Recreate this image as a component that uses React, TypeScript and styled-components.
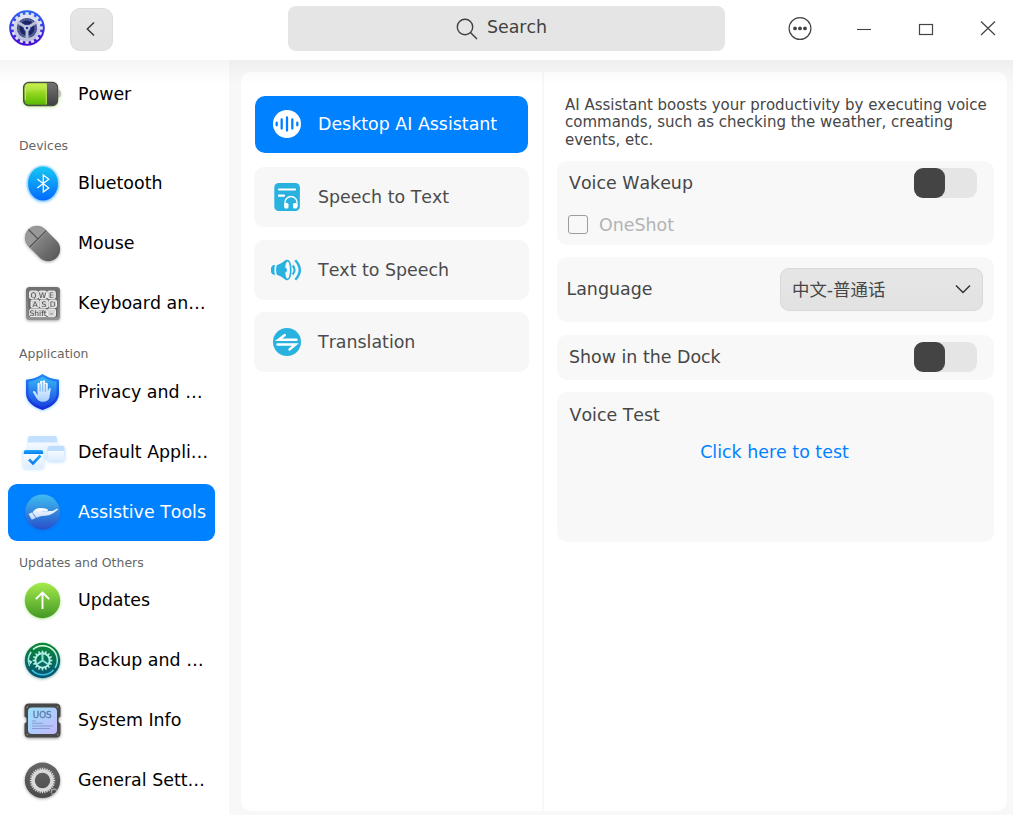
import React, { useState } from "react";
import styled, { createGlobalStyle, css } from "styled-components";

const GlobalStyle = createGlobalStyle`
  *, *::before, *::after { box-sizing: border-box; }
  body { margin: 0; background: #fff; font-family: "DejaVu Sans", "Noto Sans CJK SC", sans-serif; font-size: 17.42px; font-kerning: none; color: #000; }
  button { font: inherit; font-kerning: none; color: inherit; border: 0; padding: 0; background: none; text-align: left; }
  svg { display: block; flex: none; }
`;

const Window = styled.div`
  display: flex;
  flex-direction: column;
  width: 1013px;
  height: 815px;
  overflow: hidden;
  background: #fff;
`;

const TitleBar = styled.header`
  display: flex;
  height: 60px;
  flex: none;
  padding: 6px 0 0 9px;
  align-items: flex-start;
`;

const Logo = styled.svg`
  margin-top: 3px;
`;

const BackButton = styled.button`
  display: flex;
  align-items: center;
  justify-content: center;
  width: 43px;
  height: 43px;
  margin: 2px 0 0 25px;
  padding: 0 1px 1px 0;
  border: 1px solid #dcdcdc;
  border-radius: 10px;
  background: linear-gradient(#e6e6e6, #e3e3e3);
`;

const SearchBox = styled.div`
  display: flex;
  align-items: center;
  justify-content: center;
  gap: 9px;
  width: 437px;
  height: 45px;
  margin-left: 175px;
  padding-right: 10px;
  border-radius: 8px;
  background: #e5e5e5;
  color: #414141;
`;

const SearchLabel = styled.span`
  margin-top: -3px;
`;

const WindowControls = styled.div`
  display: flex;
  gap: 38.5px;
  margin: 10px 0 0 63px;
`;

const Body = styled.div`
  display: flex;
  flex: 1;
  min-height: 0;
  position: relative;
  &::before {
    content: "";
    position: absolute;
    inset: 0 0 auto 0;
    height: 24px;
    z-index: 2;
    pointer-events: none;
    background: linear-gradient(rgba(0, 0, 0, 0.038), rgba(0, 0, 0, 0));
  }
`;

const Sidebar = styled.nav`
  display: flex;
  flex-direction: column;
  width: 229px;
  flex: none;
  padding: 4px 14px 0 8px;
`;

const SectionTitle = styled.h2<{ $height: number; $top: number }>`
  display: flex;
  flex: none;
  align-items: center;
  height: ${(p) => p.$height}px;
  margin: 0;
  padding: ${(p) => p.$top}px 0 0 11px;
  font-size: 12.45px;
  line-height: 1;
  font-weight: 400;
  color: #666;
`;

const NavItem = styled.button<{ $active?: boolean }>`
  display: flex;
  align-items: center;
  gap: 12px;
  flex: none;
  height: 57px;
  margin: 1.5px 0;
  padding-left: 10px;
  border-radius: 9px;
  white-space: nowrap;
  color: ${(p) => (p.$active ? "#fff" : "#000")};
  background: ${(p) => (p.$active ? "#0081ff" : "transparent")};
`;

const Content = styled.main`
  display: flex;
  flex: 1;
  padding: 12px 6px 4px 12px;
  background: #f8f8f8;
`;

const Panel = styled.div`
  display: grid;
  grid-template-columns: 301px 1fr;
  column-gap: 2px;
  flex: 1;
  border-radius: 10px;
  overflow: hidden;
`;

const FeatureList = styled.section`
  display: flex;
  flex-direction: column;
  gap: 12.5px;
  padding: 22.7px 13px 0 13px;
  background: #fff;
`;

const FeatureItem = styled.button<{ $active?: boolean }>`
  display: flex;
  align-items: center;
  gap: 15px;
  height: 60px;
  padding-left: 17px;
  border-radius: 10px;
  color: #4b4b4b;
  background: #f7f7f7;
  ${(p) =>
    p.$active &&
    css`
      height: 57.5px;
      margin: 1px 1px 1.5px;
      padding-left: 16px;
      color: #fff;
      background: #0081ff;
    `}
`;

const Details = styled.section`
  display: flex;
  flex-direction: column;
  padding: 24.5px 13px 0 13px;
  background: #fff;
  color: #464646;
`;

const Description = styled.p`
  margin: 0 0 12.1px;
  padding-left: 8px;
  font-size: 15px;
  line-height: 17.5px;
  white-space: nowrap;
`;

const Card = styled.div<{ $height: number }>`
  display: flex;
  flex-direction: column;
  height: ${(p) => p.$height}px;
  margin-bottom: 12.8px;
  border-radius: 10px;
  background: #f8f8f8;
`;

const SettingRow = styled.div<{ $height: number; $indent?: number; $end?: number }>`
  display: flex;
  align-items: center;
  justify-content: space-between;
  height: ${(p) => p.$height}px;
  padding: 0 ${(p) => p.$end ?? 17.5}px 0 ${(p) => p.$indent ?? 12}px;
`;

const FieldLabel = styled.span`
  margin-top: -1.5px;
`;

const Toggle = styled.button<{ $on: boolean }>`
  display: flex;
  justify-content: ${(p) => (p.$on ? "flex-end" : "flex-start")};
  width: 62.5px;
  height: 30px;
  border-radius: 9px;
  background: #e5e5e5;
  &::before {
    content: "";
    width: 31px;
    height: 30px;
    border-radius: 9px;
    background: ${(p) => (p.$on ? "#0081ff" : "#444")};
  }
`;

const CheckRow = styled.div`
  display: flex;
  align-items: center;
  gap: 12px;
  height: 39px;
  padding-left: 11px;
  color: #b3b3b3;
`;

const CheckBox = styled.span`
  width: 19.5px;
  height: 19.5px;
  margin-right: -0.5px;
  border: 1.4px solid #9c9c9c;
  border-radius: 3px;
`;

const Select = styled.button`
  display: flex;
  align-items: center;
  justify-content: space-between;
  width: 203px;
  height: 43.5px;
  padding: 0 10px 1.5px 11px;
  border: 1px solid #d9d9d9;
  border-radius: 9px;
  background: linear-gradient(#e6e6e6, #e2e2e2);
`;

const TestLink = styled.a`
  align-self: center;
  margin: 5px 2px 0 0;
  color: #0081ff;
`;

function Teeth({ cx, cy, r, n, w, h, fill }: { cx: number; cy: number; r: number; n: number; w: number; h: number; fill: string }) {
  return (
    <g fill={fill}>
      {Array.from({ length: n }, (_, i) => (
        <rect key={i} x={cx - w / 2} y={cy - r - h} width={w} height={h + 1} transform={`rotate(${(360 / n) * i} ${cx} ${cy})`} />
      ))}
    </g>
  );
}

const Grad = ({ id, a, b, diagonal }: { id: string; a: string; b: string; diagonal?: boolean }) => (
  <linearGradient id={id} x1="0" y1="0" x2={diagonal ? "1" : "0"} y2="1">
    <stop stopColor={a} />
    <stop offset="1" stopColor={b} />
  </linearGradient>
);

const Icon = styled.svg.attrs({ width: 48, height: 48, viewBox: "0 0 48 48", fill: "none" })<{ $glow: string }>`
  overflow: visible;
  filter: drop-shadow(0 1.5px 1.5px ${(p) => p.$glow});
`;

const PowerIcon = () => (
  <Icon $glow="#9be04088">
    <defs>
      <Grad id="pw" a="#c5f03c" b="#58b900" />
      <Grad id="pd" a="#747474" b="#414141" />
    </defs>
    <path d="M40 19.500q3 .5 3 4.200t-3 4.300z" fill="#c0c0c0" />
    <rect x="5.600" y="12.400" width="34" height="23.200" rx="5" fill="url(#pd)" stroke="#4b4b4b" strokeWidth="1.200" />
    <path d="M28.500 13.300H11q-4.500 0-4.500 4.500v12.400q0 4.600 4.500 4.600h17.500z" fill="url(#pw)" />
    <path d="M28.300 13.800v20.700M7.300 18v12" stroke="#d3fa69" strokeWidth=".8" />
    <path d="M8 14.500h20V20q-10-.5-20 2z" fill="#fff" opacity=".1" />
  </Icon>
);

const BluetoothIcon = () => (
  <Icon $glow="#0088ff77">
    <defs><Grad id="bt" a="#17c8f2" b="#0069ff" /></defs>
    <ellipse cx="25" cy="24.500" rx="16.800" ry="18.600" fill="#58b9ff" opacity=".28" />
    <ellipse cx="25" cy="24.500" rx="15" ry="17" fill="url(#bt)" />
    <path d="m19.300 20 11.500 9-5.500 3.900V16.100l5.500 4.200L19.300 29" stroke="#fff" strokeWidth="1.300" />
  </Icon>
);

const MouseIcon = () => (
  <Icon $glow="#55555577">
    <defs><Grad id="ms" a="#9b9b9b" b="#5a5a5a" /></defs>
    <g transform="rotate(-45 24.500 24.500)">
      <rect x="12.600" y="4.500" width="23.800" height="40" rx="11.900" fill="url(#ms)" />
      <path d="M13.200 18a11.300 12.600 0 0 1 22.600 0z" fill="#999" />
      <path d="M12.700 18h23.600M24.500 4.700V18" stroke="#515151" strokeWidth="1.200" />
      <path d="M12.700 19.200h23.600" stroke="#aaa" strokeWidth=".5" />
    </g>
  </Icon>
);

const KeyText = styled.text`
  font: 7.6px "DejaVu Sans", sans-serif;
  text-anchor: middle;
  fill: #4c4c4c;
`;

const KeyboardIcon = () => {
  const keys: [number, number, number, string][] = [
    [11.5, 12, 8.2, "Q"], [20.7, 12, 7.8, "W"], [29.5, 12, 7.8, "E"],
    [13, 21, 8, "A"], [22, 21, 8, "S"], [31, 21, 7.5, "D"],
    [11.7, 30, 16.8, "Shift"], [29.5, 30, 8, "–"],
  ];
  return (
    <Icon $glow="#55555588">
      <defs><Grad id="kb" a="#707070" b="#929292" /></defs>
      <rect x="8" y="8" width="34" height="33" rx="3.500" fill="url(#kb)" />
      <rect x="10.500" y="11" width="29" height="27" rx="1" fill="#666" />
      {keys.map(([x, y, w, label]) => (
        <g key={label}>
          <rect x={x} y={y} width={w} height="7.600" rx="1.400" fill="#d6d6d6" stroke="#f6f6f6" strokeWidth=".9" />
          <KeyText x={x + w / 2} y={y + 6.6}>{label}</KeyText>
        </g>
      ))}
    </Icon>
  );
};

const PrivacyIcon = () => (
  <Icon $glow="#3bb2ff88">
    <defs>
      <Grad id="pv" a="#2387f5" b="#1528d8" />
      <Grad id="pi" a="#39baf6" b="#1740e0" />
      <Grad id="ph" a="#ffffff" b="#a8cfff" />
    </defs>
    <path d="M24.500 6q7 5 16.500 5.700V25q0 11.500-16.500 17Q8 36.500 8 25V11.700Q17.500 11 24.500 6z" fill="url(#pv)" />
    <path d="M24.500 8.500q6.500 4.200 14 5V25q0 9.200-14 14.500-14-5.300-14-14.500V13.500q7.500-.8 14-5z" fill="url(#pi)" />
    <path d="M19.800 28v-11.500a1.250 1.250 0 0 1 2.500 0V14.500a1.300 1.300 0 0 1 2.600 0V14a1.300 1.300 0 0 1 2.600 0v2.500a1.300 1.300 0 0 1 2.600 0V24l1-2.500q1-1.500 2-.5l-1.500 9.500q-1.300 3.800-6.500 3.800-4.800 0-7.300-5.300l-2.700-4.500q.8-1.800 2.600-.2z" fill="url(#ph)" transform="translate(-.3 -.5)" />
    <path d="M22.100 15.500v8M24.700 14v9.500M27.300 16v8" stroke="#3f92ef" strokeWidth=".7" />
  </Icon>
);

const DefaultsIcon = () => (
  <Icon $glow="#69b7ff66">
    <defs>
      <Grad id="da" a="#ffffff" b="#dcedff" />
      <Grad id="db" a="#25a9fa" b="#087df2" />
    </defs>
    <rect x="10" y="8" width="29" height="22" rx="2.500" fill="url(#da)" />
    <path d="M10 14.500v-4Q10 8 12.500 8h24Q39 8 39 10.500v4z" fill="#c4e0ff" />
    <rect x="29.500" y="18" width="17" height="15" rx="2.500" fill="url(#da)" stroke="#d8eaff" strokeWidth=".8" />
    <path d="M29.500 23v-2.500q0-2.500 2.500-2.500h12q2.500 0 2.500 2.500V23z" fill="#bfdeff" />
    <rect x="5.200" y="21.500" width="20.500" height="18.500" rx="2.500" fill="url(#da)" stroke="#e7f3ff" />
    <path d="M5.800 26v-2q0-2 2-2h15.400q2 0 2 2v2z" fill="url(#db)" />
    <path d="m11 31.500 4 4 7.500-8" stroke="url(#db)" strokeWidth="2.600" />
  </Icon>
);

const AssistiveIcon = () => (
  <Icon $glow="#1557c455">
    <defs>
      <Grad id="at" a="#3fbdf0" b="#2850cb" />
      <Grad id="ah" a="#ffffff" b="#bdd4fb" />
    </defs>
    <circle cx="24.500" cy="24" r="17.500" fill="url(#at)" />
    <path d="m10.500 26 3.500-1.500 3.800 5.500-4 1.800zM14.500 24.300q3-4 6.500-4.300 4-.5 8 1 2 1 .5 2h5l4.500-2.200q1.500-.2.700 1L35.500 25q-4.500 3-8.500 2.800-5 .2-8.500 2z" fill="url(#ah)" />
    <path d="M24 23.500h7" stroke="#b7cdf0" strokeWidth=".6" />
  </Icon>
);

const UpdatesIcon = () => (
  <Icon $glow="#6fd33488">
    <defs><Grad id="up" a="#a6ea4c" b="#419824" /></defs>
    <circle cx="24.500" cy="24.500" r="17.700" fill="url(#up)" />
    <path d="M24.500 33V17M17.800 23.200l6.700-6.700 6.700 6.700" stroke="#fff" strokeWidth="1.900" />
  </Icon>
);

const BackupIcon = () => (
  <Icon $glow="#00706a77">
    <defs>
      <Grad id="bk" a="#0a8a30" b="#07517c" />
      <linearGradient id="bw" gradientUnits="userSpaceOnUse" x1="0" y1="10" x2="0" y2="39">
        <stop stopColor="#e8fff0" />
        <stop offset="1" stopColor="#2cc3dc" />
      </linearGradient>
    </defs>
    <circle cx="24.500" cy="24.500" r="17.700" fill="url(#bk)" />
    <path d="M15 13.500a14.500 14.500 0 0 1 22 18.500M35.500 34a14.500 14.500 0 0 1-21.500 0M11.600 30a14.500 14.500 0 0 1 1.500-14" stroke="url(#bw)" strokeWidth="1.500" />
    <path d="m12.500 28.500-2.300-5 4 2z" fill="#bbf5df" />
    <Teeth cx={24.5} cy={24.5} r={7.7} n={16} w={1.5} h={2.2} fill="#b5f2e5" />
    <circle cx="24.500" cy="24.500" r="7.200" stroke="#b5f2e5" strokeWidth="2" />
    <path d="M24.500 24.500v-7M24.500 24.500l-6 4M24.500 24.500l6 4" stroke="#8ee6df" strokeWidth="2" />
  </Icon>
);

const SystemIcon = () => (
  <Icon $glow="#33333388">
    <defs><Grad id="sy" a="#99e1fb" b="#c4b7fb" diagonal /></defs>
    <path d="M11 7.500h27q4.500 0 4.500 4.500v8.500L40.500 22v4l2 1.500V37q0 4.500-4.500 4.500H11q-4.500 0-4.500-4.500v-9.500l2-1.500v-4l-2-1.500V12q0-4.500 4.500-4.500z" fill="#484848" />
    <rect x="10" y="11.500" width="29" height="26.500" rx="4" fill="url(#sy)" />
    <g fill="#777"><circle cx="9.300" cy="11" r="1" /><circle cx="39.700" cy="11" r="1" /><circle cx="9.300" cy="38.500" r="1" /><circle cx="39.700" cy="38.500" r="1" /></g>
    <text x="14.700" y="21.800" fontFamily="DejaVu Sans, sans-serif" fontSize="8.600" stroke="#5f82ad" strokeWidth=".4" textLength="19" lengthAdjust="spacingAndGlyphs" fill="#5f82ad">UOS</text>
    <path d="M14 25h4M14 27.300h11M14 30h21M14 32.500h18" stroke="#8397cf" strokeWidth=".9" />
  </Icon>
);

const GeneralIcon = () => (
  <Icon $glow="#44444477">
    <defs><Grad id="ge" a="#666" b="#4a4a4a" /></defs>
    <circle cx="24.500" cy="24.300" r="17.700" fill="url(#ge)" />
    <Teeth cx={24.5} cy={24.5} r={10.8} n={32} w={1.2} h={2} fill="#dcdcdc" />
    <circle cx="24.500" cy="24.500" r="9.500" stroke="#d9d9d9" strokeWidth="3.600" />
    <path d="m33 37 1-3 2.500-1 2.500 1.500M33.500 38.500l2.500-1" stroke="#aaa" strokeWidth="1.200" />
  </Icon>
);

const AppLogo = () => (
  <Logo width="36" height="38" viewBox="0 0 36 38" fill="none">
    <defs>
      <Grad id="lg" a="#2b68f5" b="#4708d3" />
      <Grad id="lw" a="#e1e4ee" b="#b9bedb" />
    </defs>
    <circle cx="18" cy="19" r="17.800" fill="url(#lg)" />
    <Teeth cx={18} cy={19} r={13} n={16} w={3.2} h={2.8} fill="#dde1f0" />
    <circle cx="18" cy="19" r="11.800" fill="#2b3a91" stroke="url(#lw)" strokeWidth="3.400" />
    <circle cx="18" cy="19" r="8.600" stroke="#6d7590" strokeWidth="2" strokeDasharray="1 .7" />
    <circle cx="18" cy="19" r="5.800" stroke="#1d2560" strokeWidth="3" />
    <path d="m18 19-9.500-6M18 19l9.500-6M18 19v11" stroke="#b9bed4" strokeWidth="3" />
    <circle cx="18" cy="19" r="3" fill="#c4c9dd" />
    <circle cx="18" cy="19" r="1.300" fill="#273492" />
  </Logo>
);

const FeatureSvg = styled.svg.attrs({ width: 32, height: 32, viewBox: "0 0 32 32", fill: "none" })``;

const VoiceIcon = () => (
  <FeatureSvg>
    <circle cx="16" cy="16" r="14" fill="#fff" />
    <path d="M5.700 14.700v2.600M10.700 11.500v9M16 9.500v13M21.300 11.500v9M26.300 14.700v2.600" stroke="#0081ff" strokeWidth="2.300" strokeLinecap="round" />
  </FeatureSvg>
);

const SpeechTextIcon = () => (
  <FeatureSvg>
    <rect x="3.300" y="2" width="25.600" height="28" rx="4.500" fill="#29b2df" />
    <path d="M8 8.500h16M8 14.700h5" stroke="#fff" strokeWidth="2.200" strokeLinecap="round" />
    <path d="M14 26v-4.500a6 6 0 0 1 12 0V26" stroke="#fff" strokeWidth="1.300" />
    <rect x="13.300" y="22" width="4.200" height="5.500" rx="1.500" fill="#fff" />
    <rect x="22" y="22" width="4.200" height="5.500" rx="1.500" fill="#fff" />
  </FeatureSvg>
);

const TextSpeechIcon = () => (
  <FeatureSvg>
    <path d="M4 10.700q-4.300.3-4.300 5.300T4 21.300q-1.300-5.300 0-10.600z" fill="#29b2df" />
    <path d="M5.700 11.200q4.500-1.200 8.300-4.700 1.200-1 2.300-.6v20.300q-1.100.3-2.300-.7-3.800-3.500-8.300-4.700-1.500-4.800 0-9.600z" fill="#29b2df" />
    <ellipse cx="16.500" cy="16" rx="3.300" ry="9.400" fill="#f7f7f7" stroke="#29b2df" strokeWidth="1.600" />
    <path d="M13 13.200q3 .4 3 2.800t-3 2.800z" fill="#29b2df" />
    <path d="M21.700 11.500q3.700 4.500 0 9" stroke="#29b2df" strokeWidth="2.100" />
    <path d="M24.300 6.200q9 9.800 0 19.600" stroke="#29b2df" strokeWidth="2.400" />
  </FeatureSvg>
);

const TranslationIcon = () => (
  <FeatureSvg>
    <circle cx="16" cy="16" r="14" fill="#29b2df" />
    <path d="M25.500 13.700H7.500L13.800 9M6.500 18.500H24.500L18.500 23.500" stroke="#fff" strokeWidth="2.400" strokeLinecap="round" />
  </FeatureSvg>
);

const sections = [
  { title: "", height: 0, top: 0, items: [["Power", PowerIcon]] },
  { title: "Devices", height: 29, top: 15, items: [["Bluetooth", BluetoothIcon], ["Mouse", MouseIcon], ["Keyboard an…", KeyboardIcon]] },
  { title: "Application", height: 29, top: 13, items: [["Privacy and …", PrivacyIcon], ["Default Appli…", DefaultsIcon], ["Assistive Tools", AssistiveIcon]] },
  { title: "Updates and Others", height: 28, top: 15, items: [["Updates", UpdatesIcon], ["Backup and …", BackupIcon], ["System Info", SystemIcon], ["General Sett…", GeneralIcon]] },
] as { title: string; height: number; top: number; items: [string, React.FC][] }[];

const features: [string, React.FC][] = [
  ["Desktop AI Assistant", VoiceIcon],
  ["Speech to Text", SpeechTextIcon],
  ["Text to Speech", TextSpeechIcon],
  ["Translation", TranslationIcon],
];

export default function App() {
  const [wakeup, setWakeup] = useState(false);
  const [dock, setDock] = useState(false);
  return (
    <Window>
      <GlobalStyle />
      <TitleBar>
        <AppLogo />
        <BackButton aria-label="Back">
          <svg width="12" height="16" viewBox="0 0 12 16" fill="none"><path d="M9 1.500 2.300 8 9 14.500" stroke="#333" strokeWidth="1.400" /></svg>
        </BackButton>
        <SearchBox>
          <svg width="22" height="22" viewBox="0 0 22 22" fill="none">
            <circle cx="9" cy="9" r="7.700" stroke="#414141" strokeWidth="1.400" />
            <path d="m14.500 14.500 6.500 6.500" stroke="#414141" strokeWidth="1.500" />
          </svg>
          <SearchLabel>Search</SearchLabel>
        </SearchBox>
        <WindowControls>
          <svg width="24" height="24" viewBox="0 0 24 24" fill="none">
            <circle cx="12" cy="12.500" r="10.900" stroke="#444" strokeWidth="1.200" />
            <g fill="#444"><circle cx="7" cy="12.400" r="1.900" /><circle cx="12" cy="12.400" r="1.900" /><circle cx="17" cy="12.400" r="1.900" /></g>
          </svg>
          <svg width="24" height="24" viewBox="0 0 24 24" fill="none"><path d="M6 13.500h14" stroke="#444" strokeWidth="1.100" /></svg>
          <svg width="24" height="24" viewBox="0 0 24 24" fill="none"><rect x="6.500" y="8.500" width="13" height="10" stroke="#444" strokeWidth="1.200" /></svg>
          <svg width="24" height="24" viewBox="0 0 24 24" fill="none"><path d="m5 5.500 14 13.500M19 5.500 5 19" stroke="#444" strokeWidth="1.200" /></svg>
        </WindowControls>
      </TitleBar>
      <Body>
        <Sidebar>
          {sections.map((s) => (
            <React.Fragment key={s.title}>
              {s.title && <SectionTitle $height={s.height} $top={s.top}>{s.title}</SectionTitle>}
              {s.items.map(([label, Glyph]) => (
                <NavItem key={label} $active={label === "Assistive Tools"}>
                  <Glyph />
                  {label}
                </NavItem>
              ))}
            </React.Fragment>
          ))}
        </Sidebar>
        <Content>
          <Panel>
            <FeatureList>
              {features.map(([label, Glyph], i) => (
                <FeatureItem key={label} $active={i === 0}>
                  <Glyph />
                  {label}
                </FeatureItem>
              ))}
            </FeatureList>
            <Details>
              <Description>
                AI Assistant boosts your productivity by executing voice<br />
                commands, such as checking the weather, creating<br />
                events, etc.
              </Description>
              <Card $height={83.5}>
                <SettingRow $height={44}>
                  Voice Wakeup
                  <Toggle $on={wakeup} onClick={() => setWakeup(!wakeup)} aria-label="Voice Wakeup" />
                </SettingRow>
                <CheckRow><CheckBox />OneShot</CheckRow>
              </Card>
              <Card $height={64.5}>
                <SettingRow $height={64.5} $indent={9.5} $end={11}>
                  <FieldLabel>Language</FieldLabel>
                  <Select>
                    中文-普通话
                    <svg width="18" height="12" viewBox="0 0 18 12" fill="none"><path d="m2 2.500 7 7 7-7" stroke="#333" strokeWidth="1.500" /></svg>
                  </Select>
                </SettingRow>
              </Card>
              <Card $height={45}>
                <SettingRow $height={45}>
                  Show in the Dock
                  <Toggle $on={dock} onClick={() => setDock(!dock)} aria-label="Show in the Dock" />
                </SettingRow>
              </Card>
              <Card $height={150}>
                <SettingRow $height={45} $indent={12.5}>Voice Test</SettingRow>
                <TestLink>Click here to test</TestLink>
              </Card>
            </Details>
          </Panel>
        </Content>
      </Body>
    </Window>
  );
}
